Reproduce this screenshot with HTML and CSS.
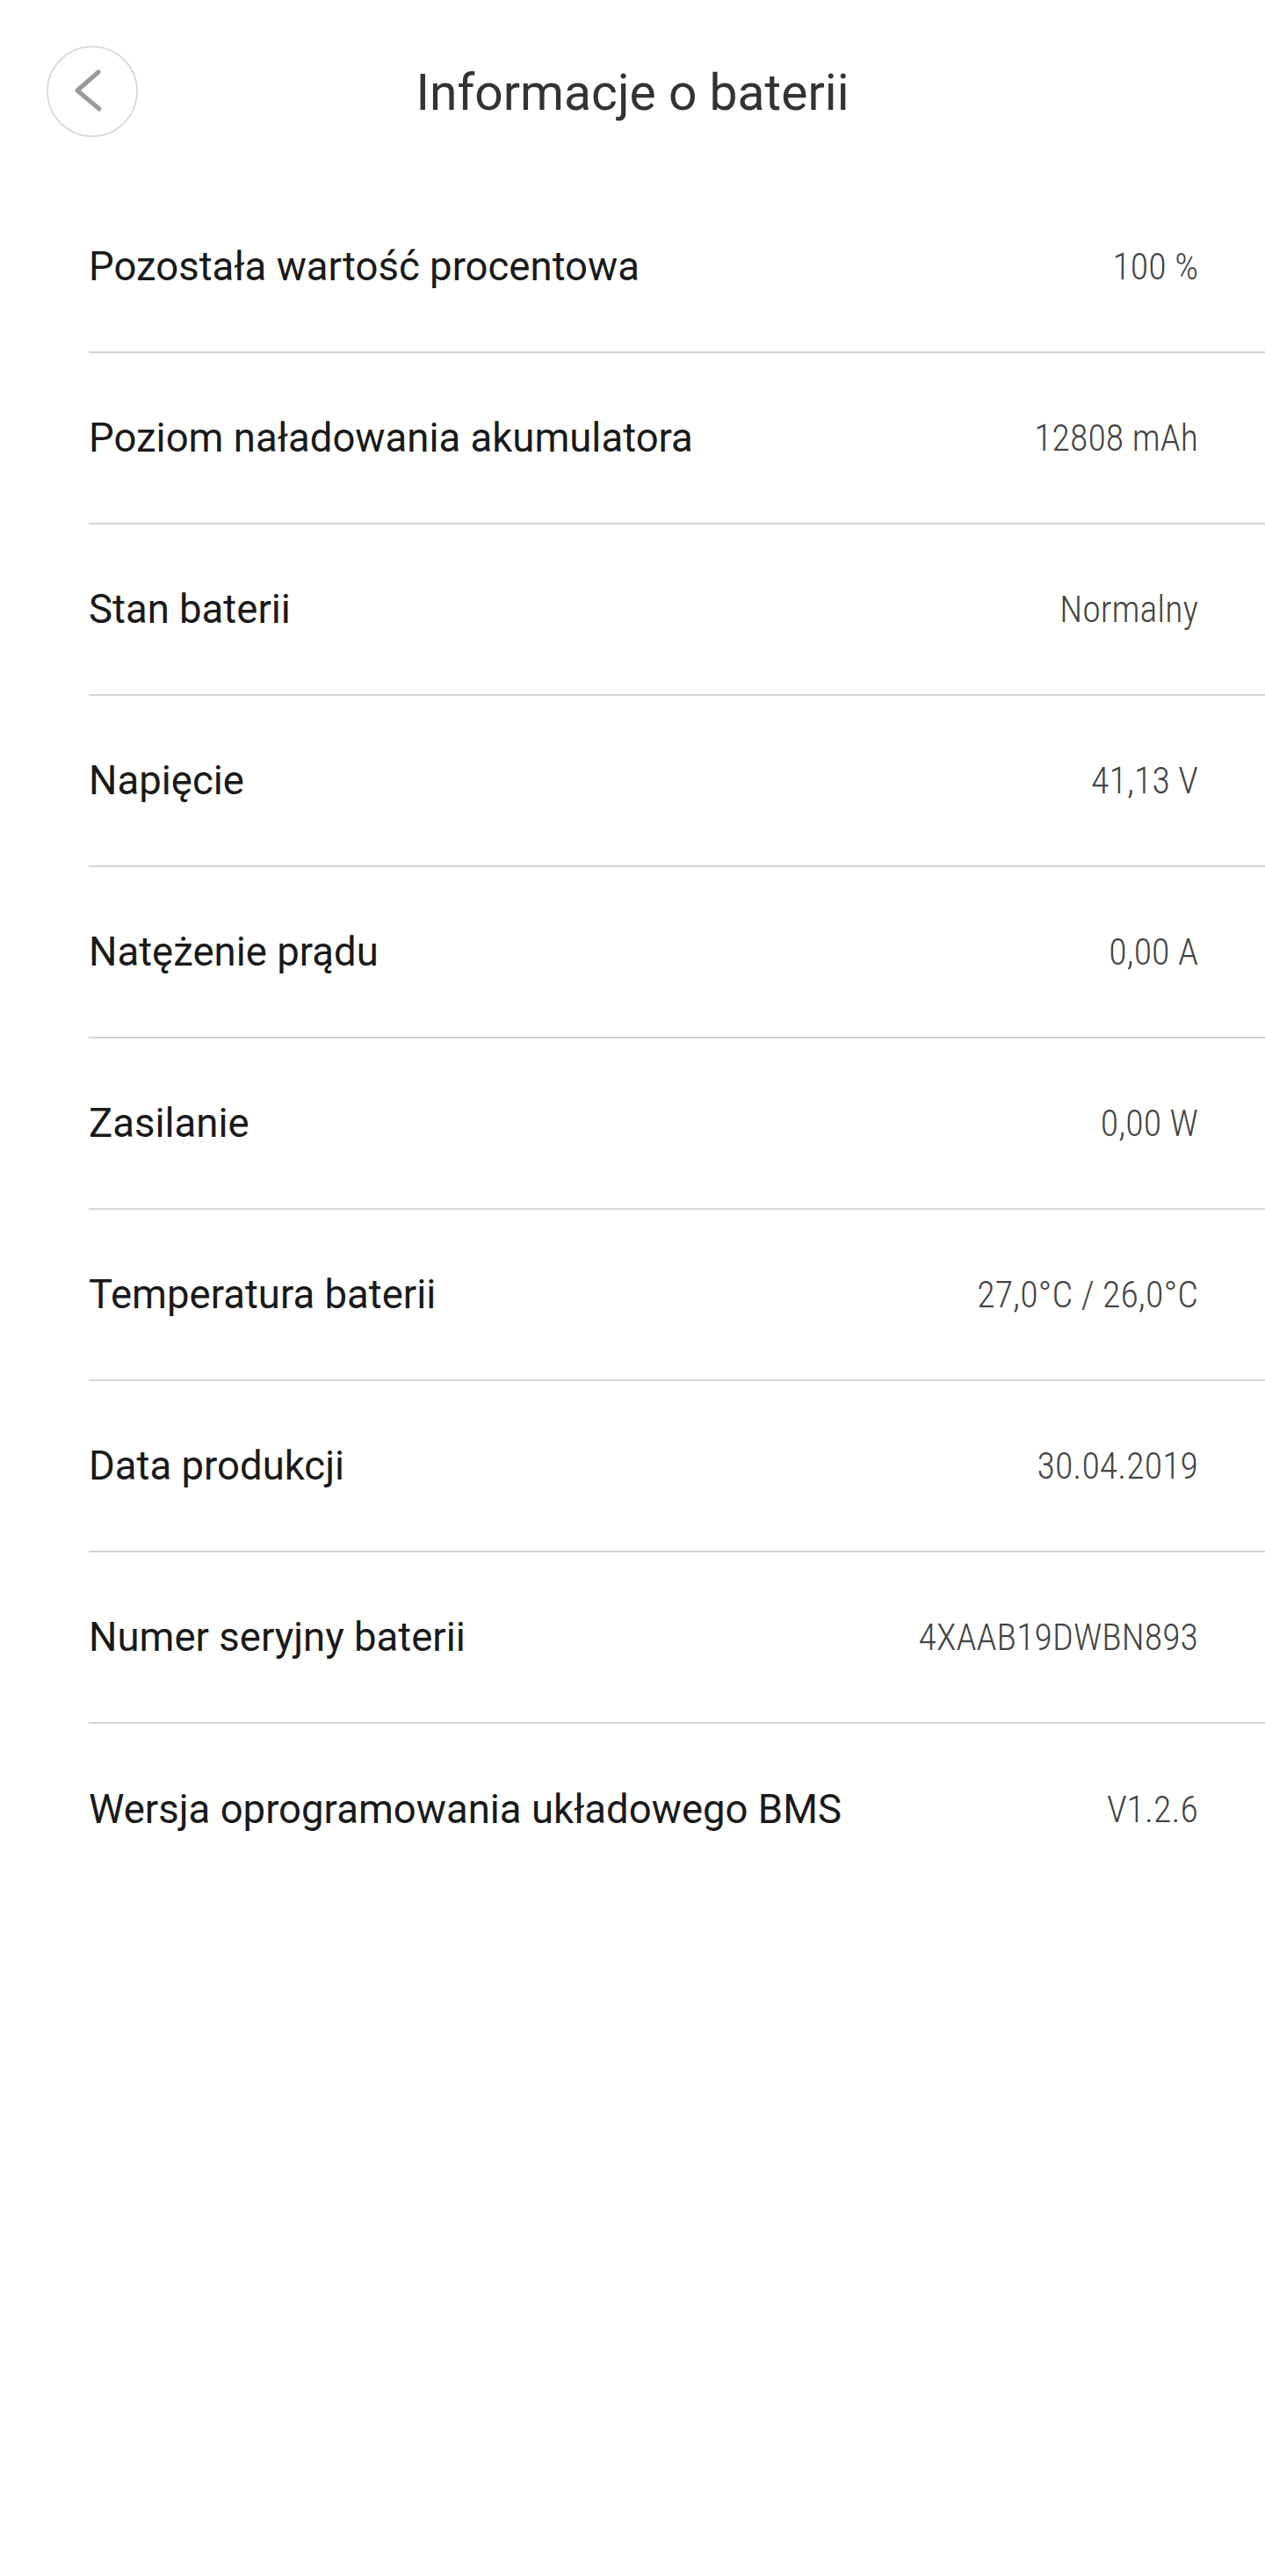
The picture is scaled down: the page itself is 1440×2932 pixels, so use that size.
FILE: index.html
```html
<!DOCTYPE html>
<html lang="pl">
    <head>
        <meta charset="UTF-8" />
        <meta name="viewport" content="width=device-width, initial-scale=1.0" />
        <title>Informacje o baterii</title>
        <link rel="stylesheet" href="styles.css">
    </head>
    <body>
        <main class="page">
            <header class="topbar">
                <button type="button" class="back-btn" aria-label="Wstecz">
                    <svg width="104" height="104" viewBox="0 0 104 104">
                        <circle cx="52" cy="52" r="51" fill="none" stroke="#d4d4d4" stroke-width="1.6" />
                        <polyline points="59,30 35,51 60,72" fill="none" stroke="#9a9a9a" stroke-width="5" stroke-linecap="round" stroke-linejoin="round" />
                    </svg>
                </button>
                <h1 class="topbar-title">Informacje o baterii</h1>
                <span></span>
            </header>

            <ul class="info-list">
                <li class="info-row">
                    <span class="info-label">Pozostała wartość procentowa</span>
                    <span class="info-value">100 %</span>
                </li>
                <li class="info-row">
                    <span class="info-label">Poziom naładowania akumulatora</span>
                    <span class="info-value">12808 mAh</span>
                </li>
                <li class="info-row">
                    <span class="info-label">Stan baterii</span>
                    <span class="info-value">Normalny</span>
                </li>
                <li class="info-row">
                    <span class="info-label">Napięcie</span>
                    <span class="info-value">41,13 V</span>
                </li>
                <li class="info-row">
                    <span class="info-label">Natężenie prądu</span>
                    <span class="info-value">0,00 A</span>
                </li>
                <li class="info-row">
                    <span class="info-label">Zasilanie</span>
                    <span class="info-value">0,00 W</span>
                </li>
                <li class="info-row">
                    <span class="info-label">Temperatura baterii</span>
                    <span class="info-value">27,0°C / 26,0°C</span>
                </li>
                <li class="info-row">
                    <span class="info-label">Data produkcji</span>
                    <span class="info-value">30.04.2019</span>
                </li>
                <li class="info-row">
                    <span class="info-label">Numer seryjny baterii</span>
                    <span class="info-value">4XAAB19DWBN893</span>
                </li>
                <li class="info-row">
                    <span class="info-label">Wersja oprogramowania układowego BMS</span>
                    <span class="info-value">V1.2.6</span>
                </li>
            </ul>
        </main>
    </body>
</html>
```

FILE: styles.css
```css
* {
    padding: 0;
    margin: 0;
    box-sizing: border-box;
}
body {
    background-color: #fff;
    font-family: Roboto, "Noto Sans", sans-serif;
    color: #1c1c1c;
}

.topbar {
    height: 207px;
    padding: 0 53px;
    display: grid;
    grid-template-columns: 1fr auto 1fr;
    align-items: center;
}
.back-btn {
    width: 104px;
    height: 104px;
    border: none;
    background: none;
    cursor: pointer;
    display: flex;
}
.topbar-title {
    font-size: 57px;
    font-weight: 400;
    color: #333;
    margin-top: 4px;
}

.info-list {
    list-style: none;
    margin-left: 101px;
}
.info-row {
    height: 195px;
    padding-right: 76px;
    border-bottom: 2px solid #d5d5d5;
    display: flex;
    justify-content: space-between;
    align-items: center;
}
.info-row:last-child {
    border-bottom: none;
}
.info-label {
    font-size: 45.5px;
    color: #1a1a1a;
}
.info-value {
    font-size: 42px;
    font-weight: 300;
    font-stretch: 84%;
    color: #444;
}
```
